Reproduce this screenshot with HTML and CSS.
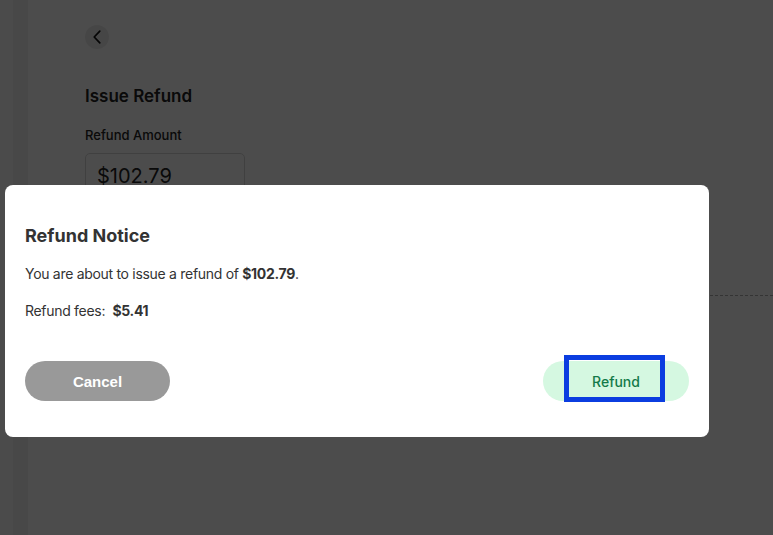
FILE: index.html
```html
<!DOCTYPE html>
<html lang="en">
<head>
<meta charset="utf-8">
<title>Issue Refund</title>
<link rel="stylesheet" href="styles.css">
</head>
<body>
<div class="app">
  <div class="rail"></div>
  <div class="rail-edge"></div>
  <main class="main">
    <button class="back" aria-label="Back">
      <svg width="24" height="24" viewBox="0 0 24 24"><path d="M14.8 6.2 L9.2 12 L14.8 17.8" fill="none" stroke="#111" stroke-width="1.7" stroke-linecap="round" stroke-linejoin="round"/></svg>
    </button>
    <h1 class="page-title">Issue Refund</h1>
    <label class="field-label">Refund Amount</label>
    <div class="amount-input">$102.79</div>
    <div class="divider"></div>
  </main>
</div>
<div class="overlay"></div>
<div class="modal" role="dialog">
  <h2 class="modal-title">Refund Notice</h2>
  <p class="modal-text">You are about to issue a refund of <strong>$102.79</strong>.</p>
  <p class="modal-text fees">Refund fees:&nbsp; <strong>$5.41</strong></p>
  <div class="actions">
    <button class="btn cancel">Cancel</button>
    <button class="btn refund">Refund</button>
  </div>
</div>
</body>
</html>
```
FILE: styles.css
```css
*, *::before, *::after { box-sizing: border-box; }
html, body { margin: 0; height: 100%; }
body {
  font-family: "Inter", "Noto Sans", sans-serif;
  color: #222;
  background: #fff;
  overflow: hidden;
}
.app {
  display: flex;
  height: 535px;
}
.rail { width: 13px; background: #fcfcfc; }
.rail-edge { width: 15px; background: #f0f0f0; }
.main {
  flex: 1;
  padding: 25px 0 0 57px;
  display: flex;
  flex-direction: column;
  align-items: flex-start;
}
.back {
  width: 24px;
  height: 24px;
  border-radius: 50%;
  border: none;
  background: #ececec;
  padding: 0;
  display: flex;
  align-items: center;
  justify-content: center;
}
.page-title {
  margin: 35px 0 0;
  font-size: 17px;
  line-height: 24px;
  font-weight: 600;
  color: #222;
}
.field-label {
  margin-top: 19px;
  font-size: 13px;
  line-height: 16px;
  font-weight: 500;
  color: #222;
}
.amount-input {
  margin-top: 10px;
  width: 160px;
  height: 46px;
  border: 1px solid #d8d8d8;
  border-radius: 5px;
  padding: 10px 11px;
  font-size: 20px;
  line-height: 24px;
  color: #222;
}
.divider {
  margin-top: 96px;
  align-self: stretch;
  border-top: 1px dashed #b0b0b0;
}
.overlay {
  position: fixed;
  inset: 0;
  background: rgba(0, 0, 0, 0.7);
}
.modal {
  position: fixed;
  left: 5px;
  top: 185px;
  width: 704px;
  height: 252px;
  background: #fff;
  border-radius: 8px;
  padding: 39px 20px 0 20px;
  color: #333;
}
.modal-title {
  margin: 0;
  font-size: 18px;
  line-height: 24px;
  font-weight: 700;
  color: #333;
}
.modal-text {
  margin: 16px 0 0;
  font-size: 14px;
  line-height: 20px;
  color: #333;
  letter-spacing: -0.3px;
}
.modal-text strong { font-weight: 700; }
.fees { margin-top: 17px; }
.actions {
  margin-top: 40px;
  display: flex;
  justify-content: space-between;
}
.btn {
  height: 40px;
  border: none;
  border-radius: 20px;
  font-family: "Liberation Sans", Arial, sans-serif;
  font-size: 15px;
  padding: 0;
}
.cancel {
  width: 145px;
  background: #999;
  color: #fff;
  font-weight: 700;
}
.refund {
  position: relative;
  width: 146px;
  background: #d5f8e1;
  color: #137a49;
  font-family: "Inter", "Noto Sans", sans-serif;
  font-size: 14px;
  font-weight: 500;
}
.refund::after {
  content: "";
  position: absolute;
  left: 21px;
  top: -6px;
  width: 101px;
  height: 47px;
  border: 5px solid #0b3de0;
}
```
